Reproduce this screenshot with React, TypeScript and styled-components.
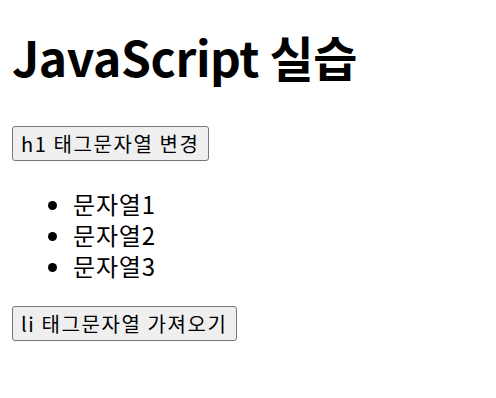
import styled, { createGlobalStyle } from "styled-components";

const GlobalStyle = createGlobalStyle`
  body {
    margin: 0;
    background: #fff;
    color: #000;
    font-family: "Noto Sans CJK KR", "Noto Sans", sans-serif;
  }
`

const Page = styled.div`
  display: flex;
  flex-direction: column;
  align-items: flex-start;
  padding: 0 12px;
`

const Title = styled.h1`
  margin: 24px 0 0;
  font-size: 48px;
  line-height: 64px;
  font-weight: 700;
  letter-spacing: -0.4px;
`

const ActionButton = styled.button<{ $top: number }>`
  margin-top: ${p => p.$top}px;
  height: 35px;
  padding: 0 8px;
  font-family: inherit;
  font-size: 20px;
  letter-spacing: 1.6px;
  color: #000;
  background: #efefef;
  border: 1px solid #767676;
  border-radius: 3px;
`

const List = styled.ul`
  margin: 27px 0 0;
  padding-left: 61px;
  font-size: 24px;
  line-height: 31px;
  letter-spacing: 0.8px;
`

const Item = styled.li``

const App = () => {
  const items = ["문자열1", "문자열2", "문자열3"];

  return (
    <>
      <GlobalStyle />
      <Page>
        <Title>JavaScript 실습</Title>
        <ActionButton $top={38}>h1 태그문자열 변경</ActionButton>
        <List>
          {items.map(item => <Item key={item}>{item}</Item>)}
        </List>
        <ActionButton $top={25}>li 태그문자열 가져오기</ActionButton>
      </Page>
    </>
  )
}

export default App;
